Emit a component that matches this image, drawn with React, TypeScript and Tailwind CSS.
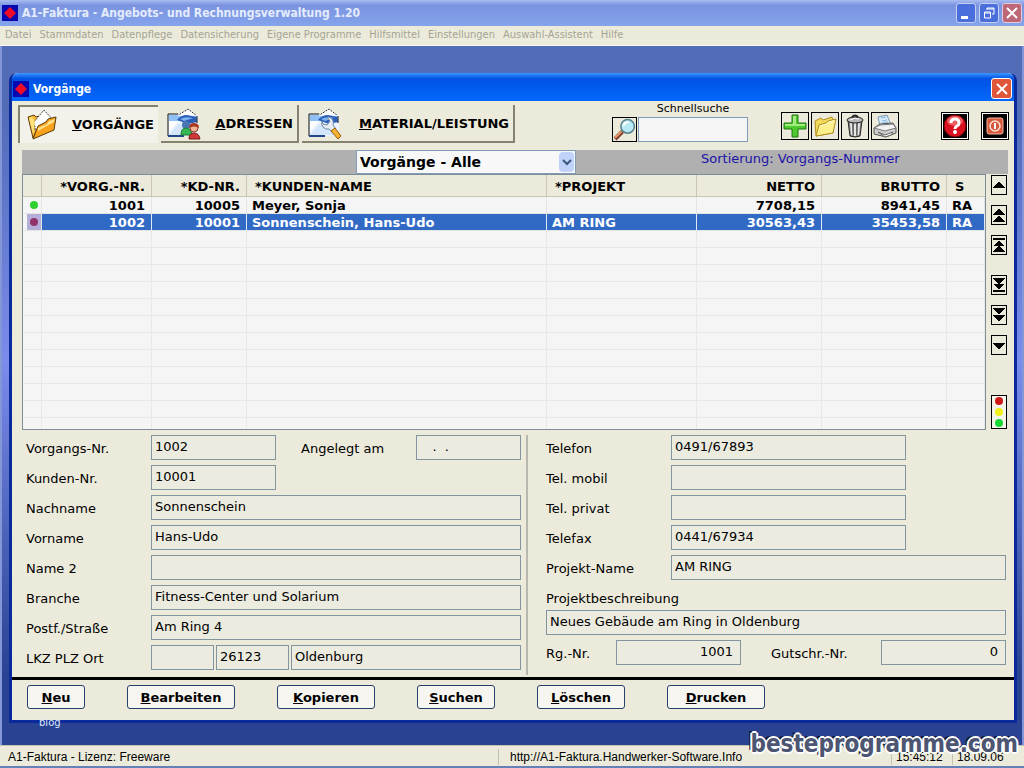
import React from 'react';
import clsx from 'clsx';

interface Vorgang {
    nr: string;
    kunde: string;
    name: string;
    projekt: string;
    netto: string;
    brutto: string;
    status: string;
    dot: string;
}

const menu = [
    'Datei', 'Stammdaten', 'Datenpflege', 'Datensicherung', 'Eigene Programme',
    'Hilfsmittel', 'Einstellungen', 'Auswahl-Assistent', 'Hilfe',
];

const rows: Vorgang[] = [
    { nr: '1001', kunde: '10005', name: 'Meyer, Sonja', projekt: '', netto: '7708,15', brutto: '8941,45', status: 'RA', dot: 'bg-[#2fd02f]' },
    { nr: '1002', kunde: '10001', name: 'Sonnenschein, Hans-Udo', projekt: 'AM RING', netto: '30563,43', brutto: '35453,58', status: 'RA', dot: 'bg-[#93336b]' },
];

const emptyRows = Array.from({ length: 12 }, (_, i) => i);

function AppIcon() {
    return (
        <svg className="size-4 shrink-0" viewBox="0 0 16 16">
            <rect width="16" height="16" fill="#0808b0" />
            <path d="M8 2l6 6-6 6-6-6z" fill="#f00a28" />
        </svg>
    );
}

function CloseGlyph() {
    return (
        <svg className="size-3" viewBox="0 0 12 12" fill="none" stroke="#fff" strokeWidth="2">
            <path d="M1 1l10 10M11 1L1 11" />
        </svg>
    );
}

function FolderOpenIcon() {
    return (
        <svg className="h-8 w-8" viewBox="0 0 32 32">
            <path d="M2 8l6-2 2 2 3-1v10L7 29z" fill="#f5b63a" stroke="#5a3c10" />
            <path d="M8 13L18 1l8 9-3 9-13 5z" fill="#fff" stroke="#444" strokeDasharray="2 1" />
            <path d="M7 30l5-13 8-4 2-3 8-2-2 13z" fill="#f7a21c" stroke="#5c3806" />
            <path d="M12 19l9-4 2-3 6-2-1 3-16 9z" fill="#ffe08a" />
            <path d="M3 9l3-1 3 5-2 12z" fill="#ffe27a" />
        </svg>
    );
}

// sheet sticking out of an envelope, shared by the two card style tabs
function CardBase() {
    return (
        <>
            <path d="M10 8L21 1l9 7z" fill="#fff" stroke="#333" strokeDasharray="2 1" />
            <path d="M1 6h9l2 1h19v21H1z" fill="#eaf3ff" />
            <path d="M2 7h8l2 1h18v5H2z" fill="#8fc0f5" />
            <path d="M10 12q4-5 10-5l9 2 1 5-9 2z" fill="#2c5fb8" />
            <path d="M13 11q5-3 13-1l-9 3z" fill="#7fb2f0" />
            <path d="M2 13h9L2 24z" fill="#fff" />
            <path d="M2 27l9-11h12l6 11z" fill="#d4e6fb" />
            <path d="M1 28V6h10M30 8v7" fill="none" stroke="#111" />
            <path d="M1 28h16" stroke="#23458c" strokeWidth="2" />
        </>
    );
}

function AddressIcon() {
    return (
        <svg className="h-8 w-[34px]" viewBox="0 0 34 32">
            <CardBase />
            <circle cx="19" cy="17" r="4" fill="#4b76b4" />
            <path d="M14 27q0-7 5-7t6 7z" fill="#35b851" stroke="#1c7a30" />
            <circle cx="27" cy="20" r="4" fill="#f0b698" stroke="#8a3b24" />
            <path d="M22 20q0-5 5-5t5 5q-5-3-10 0z" fill="#a83a22" />
            <path d="M22 31q0-6 5-6t6 6z" fill="#cf3838" stroke="#7c1717" />
        </svg>
    );
}

function MaterialIcon() {
    return (
        <svg className="h-8 w-[34px]" viewBox="0 0 34 32">
            <CardBase />
            <path d="M14 13a6 6 0 0 0 7 8l3 3 4-3-3-4a6 6 0 0 0-6-8l3 4-3 4-4-1z" fill="#e6edf5" stroke="#6c86a6" />
            <path d="M23 23l7 8 3-3-6-8z" fill="#f5b133" stroke="#9b5b00" />
        </svg>
    );
}

function MagnifierIcon() {
    return (
        <svg className="size-[23px]" viewBox="0 0 22 22">
            <path d="M2 20l7-7" stroke="#7c4028" strokeWidth="4" />
            <path d="M2 19l6-6" stroke="#e29a70" strokeWidth="2" />
            <circle cx="14" cy="8" r="6.500" fill="#b8e8f4" stroke="#59828f" strokeWidth="1.500" />
            <path d="M10 8q0-4 5-4" stroke="#fff" strokeWidth="2" fill="none" />
        </svg>
    );
}

function PlusIcon() {
    return (
        <svg className="size-6" viewBox="0 0 24 24">
            <path d="M9 1h6v8h8v6h-8v8H9v-8H1V9h8z" fill="#4cc92c" stroke="#1f7412" />
            <path d="M10 2h3v8h9v2H2v-2h8z" fill="#a5ec80" />
        </svg>
    );
}

function FolderIcon() {
    return (
        <svg className="size-6" viewBox="0 0 24 24">
            <path d="M2 7l6-3 2 2 9-3 1 3v13L3 22z" fill="#f2d95c" stroke="#b08f20" />
            <path d="M3 22L6 11l7-2 2-2 8-2-3 14z" fill="#fdf08c" stroke="#b08f20" />
            <path d="M7 12l7-2 2-2 5-1" stroke="#fffbd0" fill="none" />
        </svg>
    );
}

function TrashIcon() {
    return (
        <svg className="size-6" viewBox="0 0 24 24">
            <path d="M5 7l2 15q5 2 10 0l2-15z" fill="#8c8c8c" stroke="#222" />
            <path d="M8 9l1 12M12 9v13M16 9l-1 12" stroke="#e6e6e6" strokeWidth="2" />
            <path d="M10 9v12M14 9v12" stroke="#444" />
            <ellipse cx="12" cy="6" rx="8" ry="3" fill="#b8b8b8" stroke="#222" />
            <path d="M9 3q3-3 6 0" fill="none" stroke="#222" strokeWidth="2" />
            <path d="M7 6q5-3 9-1" stroke="#fff" fill="none" />
        </svg>
    );
}

function PrinterIcon() {
    return (
        <svg className="size-6" viewBox="0 0 24 24">
            <path d="M7 12L5 3l9-2 4 10z" fill="#d6ecfa" stroke="#7d9ab5" />
            <path d="M8 4l5-1M9 7l5-1M9 9l6-1" stroke="#8ab8dd" />
            <path d="M1 14l6-4 13-1 3 5v5l-10 4-12-3z" fill="#cdcdcd" stroke="#555" />
            <path d="M1 14l11 3 11-3-3-4-13 1z" fill="#f2f2f2" stroke="#777" />
            <path d="M5 18l7 3 8-3-2 3-6 2z" fill="#fff" stroke="#666" />
        </svg>
    );
}

function HelpIcon() {
    return (
        <svg className="size-6" viewBox="0 0 24 24">
            <circle cx="12" cy="12" r="11" fill="#d81020" stroke="#700008" />
            <ellipse cx="12" cy="7" rx="8" ry="5" fill="#f05a62" />
            <path d="M8 9q0-4 4-4t4 4q0 2-2 3t-2 3" fill="none" stroke="#fff" strokeWidth="3" />
            <circle cx="12" cy="18" r="2" fill="#fff" />
        </svg>
    );
}

function PowerIcon() {
    return (
        <svg className="size-6" viewBox="0 0 24 24">
            <rect x="4" y="4" width="16" height="16" rx="2" fill="#d8583c" stroke="#f6b8a4" />
            <circle cx="12" cy="12" r="5" fill="none" stroke="#ffe2d6" strokeWidth="1.5" />
            <path d="M12 9v6" stroke="#fff" strokeWidth="2" />
        </svg>
    );
}

interface TabProps {
    icon: React.ReactNode;
    label: string;
    width: string;
    active?: boolean;
}

function Tab({ icon, label, width, active }: TabProps) {
    return (
        <button
            className={clsx(
                'flex h-[38px] items-center justify-between pr-1 pl-1.5 text-[13px] font-bold',
                width,
                active
                    ? 'border-t-2 border-l-2 border-[#85826f] bg-[#f2f1ea]'
                    : 'border-r-2 border-b-2 border-[#85826f] bg-[#ecebdb] pt-0.5',
            )}
        >
            {icon}
            <span><u>{label[0]}</u>{label.slice(1)}</span>
        </button>
    );
}

function ToolButton({ label, dark, children }: { label: string; dark?: boolean; children: React.ReactNode }) {
    return (
        <button aria-label={label} className={clsx('flex size-7 items-center justify-center border border-black', dark && 'bg-black ring-1 ring-white ring-inset')}>
            {children}
        </button>
    );
}

function NavButton({ label, path, className }: { label: string; path: string; className?: string }) {
    return (
        <button aria-label={label} className={clsx('flex h-5 w-4 items-center justify-center border border-black', className)}>
            <svg className="h-4 w-3" viewBox="0 0 12 16" shapeRendering="crispEdges"><path d={path} fill="#000" /></svg>
        </button>
    );
}

interface FieldProps {
    id: string;
    label: string;
    value?: string;
    width?: string;
}

const inputClass = 'h-[25px] min-w-0 border border-[#83969f] bg-[#ecebdf] px-[3px] pb-0.5 text-[13px] outline-none';

function Field({ id, label, value = '', width = 'flex-1' }: FieldProps) {
    return (
        <div className="flex flex-auto">
            <label htmlFor={id} className="w-[125px] shrink-0 pt-[5px]">{label}</label>
            <input id={id} defaultValue={value} className={clsx(inputClass, width)} />
        </div>
    );
}

function ActionButton({ label, width }: { label: string; width: string }) {
    return (
        <button className={clsx('h-6 rounded-[3px] border border-[#26406a] bg-[#f6f5f0] pt-0.5 text-[13px] leading-5 font-bold', width)}>
            <u>{label[0]}</u>{label.slice(1)}
        </button>
    );
}

function VorgangTable() {
    const head = 'border-b border-[#c9c7b4] pt-0.5 font-bold';
    const rule = 'border-r border-r-[#c9c7b4]';

    return (
        <div className="h-64 min-w-0 flex-1 overflow-hidden border border-[#7d8e96] bg-[#f5f5f5]">
            <table className="w-full table-fixed border-separate border-spacing-0 text-[13px] leading-[14px]">
                <colgroup>
                    <col className="w-[19px]" />
                    <col className="w-[110px]" />
                    <col className="w-[95px]" />
                    <col />
                    <col className="w-[150px]" />
                    <col className="w-[125px]" />
                    <col className="w-[125px]" />
                    <col className="w-[38px]" />
                </colgroup>
                <thead>
                    <tr className="h-[22px] bg-[#ecebdb]">
                        <th className={clsx(head, rule)} aria-label="Ampel" />
                        <th className={clsx(head, rule, 'pr-1.5 text-right')}>*VORG.-NR.</th>
                        <th className={clsx(head, rule, 'pr-1.5 text-right')}>*KD-NR.</th>
                        <th className={clsx(head, rule, 'pl-2 text-left')}>*KUNDEN-NAME</th>
                        <th className={clsx(head, rule, 'pl-2 text-left')}>*PROJEKT</th>
                        <th className={clsx(head, rule, 'pr-1.5 text-right')}>NETTO</th>
                        <th className={clsx(head, rule, 'pr-1.5 text-right')}>BRUTTO</th>
                        <th className={clsx(head, 'pl-2 text-left')}>S</th>
                    </tr>
                </thead>
                <tbody>
                    {rows.map((row, i) => {
                        const selected = i === 1;
                        const cell = selected
                            ? 'border-r border-b border-r-[#dfe8f5] border-b-[#e4e4e4] bg-[#316ac5] pt-0.5 text-white'
                            : 'border-r border-b border-[#e4e4e4] pt-0.5';
                        return (
                            <tr key={row.nr} className="h-[17px] font-bold">
                                <td className="border-r border-b border-[#e4e4e4]">
                                    <div className={clsx('ml-auto flex h-4 w-3.5 items-center justify-center', selected && 'bg-[#b4afd8]')}>
                                        <span className={clsx('size-2 rounded-full', row.dot)} />
                                    </div>
                                </td>
                                <td className={clsx(cell, 'pr-1.5 text-right')}>{row.nr}</td>
                                <td className={clsx(cell, 'pr-1.5 text-right')}>{row.kunde}</td>
                                <td className={clsx(cell, 'pl-[5px]')}>{row.name}</td>
                                <td className={clsx(cell, 'pl-[5px]')}>{row.projekt}</td>
                                <td className={clsx(cell, 'pr-1.5 text-right')}>{row.netto}</td>
                                <td className={clsx(cell, 'pr-1.5 text-right')}>{row.brutto}</td>
                                <td className={clsx(cell, 'pl-[5px]')}>{row.status}</td>
                            </tr>
                        );
                    })}
                    {emptyRows.map(i => (
                        <tr key={i} className="h-[17px]">
                            {[0, 1, 2, 3, 4, 5, 6, 7].map(c => <td key={c} className="border-r border-b border-[#e8e8e8]" />)}
                        </tr>
                    ))}
                </tbody>
            </table>
        </div>
    );
}

function NavColumn() {
    return (
        <div className="flex w-4 flex-col pt-px">
            <NavButton label="Zeile hoch" path="M6 4l6 7H0z" />
            <NavButton label="Seite hoch" path="M6 1l6 7H0zM6 8l6 7H0z" className="mt-2.5" />
            <NavButton label="Anfang" path="M0 1h12v2H0zM6 3l5 6H1zM6 8l6 7H0z" className="mt-2.5" />
            <NavButton label="Ende" path="M0 13h12v2H0zM6 13l5-6H1zM6 8l6-7H0z" className="mt-5" />
            <NavButton label="Seite runter" path="M6 8l6-7H0zM6 15l6-7H0z" className="mt-2.5" />
            <NavButton label="Zeile runter" path="M6 13l6-7H0z" className="mt-2.5" />
            <button aria-label="Ampel" className="mt-10 flex h-[34px] flex-col items-center justify-around border border-black bg-[#f5f5ea]">
                <span className="size-2 rounded-full bg-[#d01818]" />
                <span className="size-2 rounded-full bg-[#f2f21a]" />
                <span className="size-2 rounded-full bg-[#18d838]" />
            </button>
        </div>
    );
}

function DetailForm() {
    return (
        <div className="grid grid-cols-[1fr_486px] pt-[5px] pb-0.5 text-[13px] leading-[18px]">
            <div className="flex flex-col gap-[5px] border-r-2 border-[#b9b8ae] pr-[5px] pb-[5px] pl-3.5">
                <div className="flex">
                    <div className="flex flex-1">
                        <Field id="vorgang" label="Vorgangs-Nr." value="1002" width="w-[125px]" />
                    </div>
                    <div className="flex w-[220px] justify-between">
                        <label htmlFor="angelegt" className="pt-[5px]">Angelegt am</label>
                        <input id="angelegt" defaultValue="   .  ." className={clsx(inputClass, 'w-[105px]')} />
                    </div>
                </div>
                <Field id="kunde" label="Kunden-Nr." value="10001" width="w-[125px]" />
                <Field id="nachname" label="Nachname" value="Sonnenschein" />
                <Field id="vorname" label="Vorname" value="Hans-Udo" />
                <Field id="name2" label="Name 2" />
                <Field id="branche" label="Branche" value="Fitness-Center und Solarium" />
                <Field id="strasse" label="Postf./Straße" value="Am Ring 4" />
                <div className="flex gap-0.5">
                    <div className="flex">
                        <Field id="lkz" label="LKZ PLZ Ort" width="w-[63px]" />
                    </div>
                    <input aria-label="PLZ" defaultValue="26123" className={clsx(inputClass, 'w-[73px]')} />
                    <input aria-label="Ort" defaultValue="Oldenburg" className={clsx(inputClass, 'flex-1')} />
                </div>
            </div>
            <div className="flex flex-col gap-[5px] pr-2 pb-[5px] pl-[18px]">
                <Field id="telefon" label="Telefon" value="0491/67893" width="w-[235px]" />
                <Field id="mobil" label="Tel. mobil" width="w-[235px]" />
                <Field id="privat" label="Tel. privat" width="w-[235px]" />
                <Field id="telefax" label="Telefax" value="0441/67934" width="w-[235px]" />
                <Field id="projekt" label="Projekt-Name" value="AM RING" />
                <div className="flex flex-col">
                    <label htmlFor="beschreibung" className="h-[25px] pt-[5px]">Projektbeschreibung</label>
                    <input id="beschreibung" defaultValue="Neues Gebäude am Ring in Oldenburg" className={inputClass} />
                </div>
                <div className="flex pb-[5px]">
                    <label htmlFor="rgnr" className="w-[70px] pt-[5px]">Rg.-Nr.</label>
                    <input id="rgnr" defaultValue="1001" className={clsx(inputClass, 'w-[125px] pr-[7px] text-right')} />
                    <label htmlFor="gsnr" className="ml-[30px] pt-[5px]">Gutschr.-Nr.</label>
                    <input id="gsnr" defaultValue="0" className={clsx(inputClass, 'ml-auto w-[125px] pr-[7px] text-right')} />
                </div>
            </div>
        </div>
    );
}

function VorgaengeWindow() {
    return (
        <section className="rounded-t-lg border-x-[3px] border-b-[3px] border-[#0a2a9c] bg-[#ecebdb]">
            <header className="flex h-7 items-center gap-1 rounded-t-md bg-linear-to-b from-[#3c96ff] via-[#0052e4] via-20% to-[#0468fc] pt-[3px] pr-0.5 pl-px text-white">
                <AppIcon />
                <h2 className="flex-1 font-['DejaVu_Sans_Condensed','DejaVu_Sans',sans-serif] text-[12px] font-bold">Vorgänge</h2>
                <button aria-label="Schließen" className="flex size-[21px] items-center justify-center rounded-[3px] border border-white bg-[#e0563a]">
                    <CloseGlyph />
                </button>
            </header>

            <div className="flex pt-1 pr-[5px] pl-1.5">
                <div className="flex gap-[3px]">
                    <Tab icon={<FolderOpenIcon />} label="VORGÄNGE" width="w-[140px]" active />
                    <Tab icon={<AddressIcon />} label="ADRESSEN" width="w-[138px]" />
                    <Tab icon={<MaterialIcon />} label="MATERIAL/LEISTUNG" width="w-[213px]" />
                </div>
                <div className="ml-auto flex items-end pb-px">
                    <button aria-label="Suchen" className="flex size-[25px] items-center justify-center border border-black">
                        <MagnifierIcon />
                    </button>
                    <div className="ml-px flex flex-col items-center">
                        <label htmlFor="suche" className="h-3 text-[11px] leading-2">Schnellsuche</label>
                        <input id="suche" className="h-[25px] w-[110px] border border-[#7f9db9] bg-[#f5f5f5] px-1 text-[13px]" />
                    </div>
                </div>
                <div className="ml-[33px] flex gap-0.5 pt-[7px]">
                    <ToolButton label="Neu"><PlusIcon /></ToolButton>
                    <ToolButton label="Öffnen"><FolderIcon /></ToolButton>
                    <ToolButton label="Löschen"><TrashIcon /></ToolButton>
                    <ToolButton label="Drucken"><PrinterIcon /></ToolButton>
                </div>
                <div className="ml-[42px] flex gap-3 pt-[7px]">
                    <ToolButton label="Hilfe" dark><HelpIcon /></ToolButton>
                    <ToolButton label="Beenden" dark><PowerIcon /></ToolButton>
                </div>
            </div>

            <div className="mt-[7px] mr-1.5 ml-2.5">
                <div className="grid h-6 grid-cols-[334fr_220px_432fr] bg-[#b0b0b0]">
                    <div className="relative col-start-2">
                        <select aria-label="Filter" className="h-6 w-full appearance-none border border-[#7f9db9] bg-[#f8f8f8] px-[3px] text-[14px] leading-5 font-bold">
                            <option>Vorgänge - Alle</option>
                        </select>
                        <span className="pointer-events-none absolute top-0.5 right-0.5 flex h-5 w-[15px] items-center justify-center rounded-sm bg-[#c0d2fa]">
                            <svg className="size-2.5" viewBox="0 0 10 10"><path d="M1 3l4 4 4-4" fill="none" stroke="#3c5684" strokeWidth="2" /></svg>
                        </span>
                    </div>
                    <span className="pl-[125px] text-[13px] leading-[18px] text-[#1c12a8]">Sortierung: Vorgangs-Nummer</span>
                </div>
                <div className="flex gap-[5px] pr-px">
                    <VorgangTable />
                    <NavColumn />
                </div>
            </div>

            <DetailForm />

            <footer className="flex gap-[42px] border-t-[3px] border-black pt-[5px] pb-[11px] pl-[15px]">
                <ActionButton label="Neu" width="w-[58px]" />
                <ActionButton label="Bearbeiten" width="w-[108px]" />
                <ActionButton label="Kopieren" width="w-[98px]" />
                <ActionButton label="Suchen" width="w-[78px]" />
                <ActionButton label="Löschen" width="w-[88px]" />
                <ActionButton label="Drucken" width="w-[98px]" />
            </footer>
        </section>
    );
}

export default function App() {
    return (
        <div className="relative flex min-h-screen flex-col bg-[#ecebdb] font-['DejaVu_Sans',Verdana,sans-serif] text-black">
            <header className="flex h-[26px] items-center gap-1 bg-linear-to-b from-[#a8bdf0] via-[#7b93e0] via-20% to-[#84a4ec] pr-0.5 pl-0.5 text-white">
                <AppIcon />
                <h1 className="flex-1 font-['DejaVu_Sans_Condensed','DejaVu_Sans',sans-serif] text-[12px] font-bold text-[#e4ecfc]">
                    A1-Faktura - Angebots- und Rechnungsverwaltung 1.20
                </h1>
                <div className="flex gap-[3px]">
                    <button aria-label="Minimieren" className="flex size-5 items-end rounded-[3px] border border-[#c4d0f4] bg-[#4a6edc] pb-[3px] pl-1">
                        <span className="h-[3px] w-[7px] bg-white" />
                    </button>
                    <button aria-label="Wiederherstellen" className="flex size-5 items-center justify-center rounded-[3px] border border-[#c4d0f4] bg-[#4a6edc]">
                        <svg className="size-3" viewBox="0 0 12 12" fill="none" stroke="#fff">
                            <path d="M4 3V1h7v6H9M4 2h7M1.500 5h6v6h-6zM1 6h7" />
                        </svg>
                    </button>
                    <button aria-label="Beenden" className="flex size-5 items-center justify-center rounded-[3px] border border-[#e4ccd8] bg-[#bd6878]">
                        <CloseGlyph />
                    </button>
                </div>
            </header>

            <nav className="flex h-5 items-center gap-2 border-b border-[#f8f8f4] pl-[5px] font-['DejaVu_Sans_Condensed','DejaVu_Sans',sans-serif] text-[11px] text-[#a5a494]">
                {menu.map(item => <a key={item} href="#">{item}</a>)}
            </nav>

            <main className="relative flex-1 border-x-2 border-[#8296d8] bg-linear-to-b from-[#536cb8] from-10% via-[#7a8cec] via-45% to-[#2a4292] to-90% pt-[27px] pr-[5px] pb-[22px] pl-[7px]">
                <VorgaengeWindow />
                <span className="absolute bottom-4 left-[37px] text-[10px] leading-3 text-[#dfe6f8]">blog</span>
            </main>

            <footer className="grid h-[23px] grid-cols-[498fr_393fr_61px_72px] items-center border-t border-b-2 border-t-[#c4c2b0] border-b-[#6482b8] pt-0.5 font-['Liberation_Sans',Arial,sans-serif] text-[12px] leading-4">
                <span className="pl-2">A1-Faktura - Lizenz: Freeware</span>
                <span className="border-l border-[#c4c2b0] pl-[11px]">http://A1-Faktura.Handwerker-Software.Info</span>
                <span className="border-l border-[#c4c2b0] pl-1">15:45:12</span>
                <span className="border-l border-[#c4c2b0] pl-1">18.09.06</span>
            </footer>

            <div className="pointer-events-none absolute right-1.5 bottom-2 font-['DejaVu_Sans_Condensed','DejaVu_Sans',sans-serif] text-[24px] leading-8 font-bold text-[#4c5672] [text-shadow:2px_0_0_#fff,-2px_0_0_#fff,0_2px_0_#fff,0_-2px_0_#fff,1px_1px_0_#fff,-1px_1px_0_#fff,1px_-1px_0_#fff,-1px_-1px_0_#fff,-3px_-2px_0_#101830]">
                besteprogramme.com
            </div>
        </div>
    );
}
